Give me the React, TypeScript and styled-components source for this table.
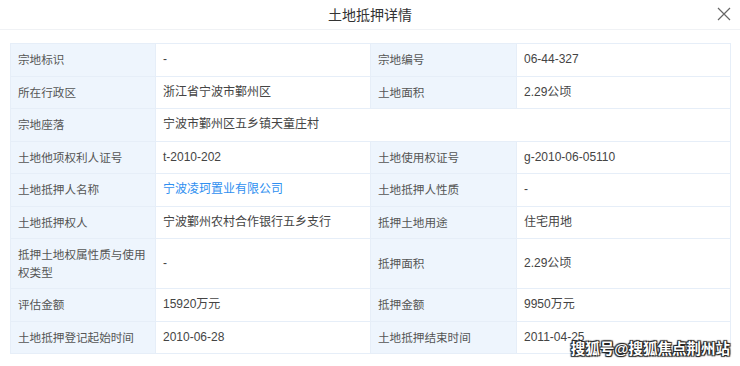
import React from 'react';
import styled, { createGlobalStyle } from 'styled-components';

const GlobalStyle = createGlobalStyle`
  html, body {
    margin: 0;
    padding: 0;
    background: #fff;
  }
  body {
    font-family: "Liberation Sans", "Noto Sans CJK SC", sans-serif;
  }
`;

const Dialog = styled.div`
  position: relative;
  width: 740px;
  height: 366px;
  overflow: hidden;
  background: #fff;
`;

const Header = styled.div`
  height: 30px;
  display: flex;
  align-items: center;
  justify-content: center;
  border-bottom: 1px solid #f0f2f5;
  box-sizing: border-box;
  position: relative;
`;

const Title = styled.div`
  font-size: 14px;
  color: #333;
  margin-top: -1px;
`;

const Close = styled.button`
  position: absolute;
  right: 9px;
  top: 7px;
  width: 14px;
  height: 14px;
  padding: 0;
  border: 0;
  background: none;
  display: flex;
`;

const Body = styled.div`
  padding: 13px 9px 0 10px;
`;

const Table = styled.table`
  width: 721px;
  border-collapse: collapse;
  table-layout: fixed;
  font-size: 12px;
  line-height: 17.5px;
`;

const Label = styled.td`
  background: #eef5fd;
  color: #555;
  font-size: 11.6px;
  white-space: pre;
  padding: 7px 0 7px 7px;
  border: 1px solid #e6eef8;
  vertical-align: middle;
`;

const Value = styled.td<{ $link?: boolean }>`
  background: #fff;
  color: ${(p) => (p.$link ? '#2f8ff0' : '#444')};
  padding: 7px 7px;
  border: 1px solid #e6eef8;
  vertical-align: middle;
`;

const Watermark = styled.div`
  position: absolute;
  right: 10px;
  bottom: 8px;
  font-size: 14.5px;
  font-weight: bold;
  color: #fff;
  text-shadow: 0 0 1px #222, 0 0 1px #222, 1px 1px 1px #222, -1px -1px 1px #222, 1px -1px 1px #222, -1px 1px 1px #222;
`;

type Row = [string, string, string?, string?, boolean?];

const rows: Row[] = [
  ['宗地标识', '-', '宗地编号', '06-44-327'],
  ['所在行政区', '浙江省宁波市鄞州区', '土地面积', '2.29公顷'],
  ['宗地座落', '宁波市鄞州区五乡镇天童庄村'],
  ['土地他项权利人证号', 't-2010-202', '土地使用权证号', 'g-2010-06-05110'],
  ['土地抵押人名称', '宁波凌珂置业有限公司', '土地抵押人性质', '-', true],
  ['土地抵押权人', '宁波鄞州农村合作银行五乡支行', '抵押土地用途', '住宅用地'],
  ['抵押土地权属性质与使用\n权类型', '-', '抵押面积', '2.29公顷'],
  ['评估金额', '15920万元', '抵押金额', '9950万元'],
  ['土地抵押登记起始时间', '2010-06-28', '土地抵押结束时间', '2011-04-25'],
];

export default function App() {
  return (
    <Dialog>
      <GlobalStyle />
      <Header>
        <Title>土地抵押详情</Title>
        <Close aria-label="close">
          <svg width="14" height="14" viewBox="0 0 14 14">
            <path d="M1 1 L13 13 M13 1 L1 13" stroke="#666" strokeWidth="1.2" fill="none" />
          </svg>
        </Close>
      </Header>
      <Body>
        <Table>
          <colgroup>
            <col style={{ width: 145 }} />
            <col style={{ width: 215 }} />
            <col style={{ width: 146 }} />
            <col />
          </colgroup>
          <tbody>
            {rows.map(([l1, v1, l2, v2, link], i) => (
              <tr key={i}>
                <Label>{l1}</Label>
                {l2 === undefined ? (
                  <Value colSpan={3}>{v1}</Value>
                ) : (
                  <>
                    <Value $link={link}>{v1}</Value>
                    <Label>{l2}</Label>
                    <Value>{v2}</Value>
                  </>
                )}
              </tr>
            ))}
          </tbody>
        </Table>
      </Body>
      <Watermark>搜狐号@搜狐焦点荆州站</Watermark>
    </Dialog>
  );
}
